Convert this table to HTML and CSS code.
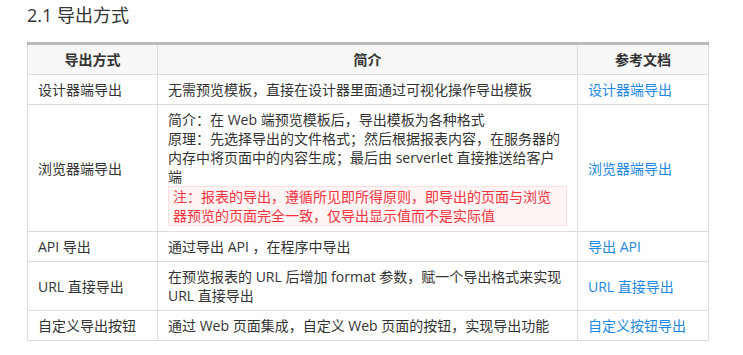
FILE: index.html
```html
<!DOCTYPE html>
<html lang="zh-CN">
<head>
<meta charset="utf-8">
<title>2.1 导出方式</title>
<link rel="stylesheet" href="styles.css">
</head>
<body>
<div class="page">
  <h2 class="title">2.1 导出方式</h2>
  <table class="export-table">
    <colgroup>
      <col class="c1">
      <col class="c2">
      <col class="c3">
    </colgroup>
    <thead>
      <tr>
        <th>导出方式</th>
        <th>简介</th>
        <th>参考文档</th>
      </tr>
    </thead>
    <tbody>
      <tr>
        <td>设计器端导出</td>
        <td>无需预览模板，直接在设计器里面通过可视化操作导出模板</td>
        <td><a class="link" href="#">设计器端导出</a></td>
      </tr>
      <tr>
        <td>浏览器端导出</td>
        <td>
          <div>简介：在 Web 端预览模板后，导出模板为各种格式</div>
          <div>原理：先选择导出的文件格式；然后根据报表内容，在服务器的内存中将页面中的内容生成；最后由 serverlet 直接推送给客户端</div>
          <div class="note">注：报表的导出，遵循所见即所得原则，即导出的页面与浏览器预览的页面完全一致，仅导出显示值而不是实际值</div>
        </td>
        <td><a class="link" href="#">浏览器端导出</a></td>
      </tr>
      <tr>
        <td>API 导出</td>
        <td>通过导出 API ，在程序中导出</td>
        <td><a class="link" href="#">导出 API</a></td>
      </tr>
      <tr>
        <td>URL 直接导出</td>
        <td>在预览报表的 URL 后增加 format 参数，赋一个导出格式来实现 URL 直接导出</td>
        <td><a class="link" href="#">URL 直接导出</a></td>
      </tr>
      <tr>
        <td>自定义导出按钮</td>
        <td>通过 Web 页面集成，自定义 Web 页面的按钮，实现导出功能</td>
        <td><a class="link" href="#">自定义按钮导出</a></td>
      </tr>
    </tbody>
  </table>
</div>
</body>
</html>
```

FILE: styles.css
```css
html, body {
  margin: 0;
  padding: 0;
  background: #fff;
}

body {
  font-family: "Open Sans", "Noto Sans CJK SC", sans-serif;
  color: #333;
  font-size: 14px;
  line-height: 19px;
}

.page {
  padding: 2px 0 0 27px;
}

.title {
  margin: 0 0 14px 0;
  font-size: 18px;
  font-weight: 400;
  line-height: 26px;
  color: #333;
}

.export-table {
  border-collapse: collapse;
  table-layout: fixed;
  width: 681px;
  border-top: 3px solid #bbb;
}

.c1 { width: 130px; }
.c2 { width: 420px; }
.c3 { width: 131px; }

.export-table th,
.export-table td {
  border: 1px solid #ddd;
  padding: 5px 10px;
  vertical-align: middle;
  text-align: left;
}

.export-table th {
  background: #f7f7f7;
  font-weight: 700;
  text-align: center;
  border-top: 3px solid #bbb;
}

.link {
  color: #1e88e5;
  text-decoration: none;
}

.note {
  color: #f5333f;
  background: #fff5f5;
  border: 1px solid #fbe0e0;
  padding: 0 4px;
}
```
